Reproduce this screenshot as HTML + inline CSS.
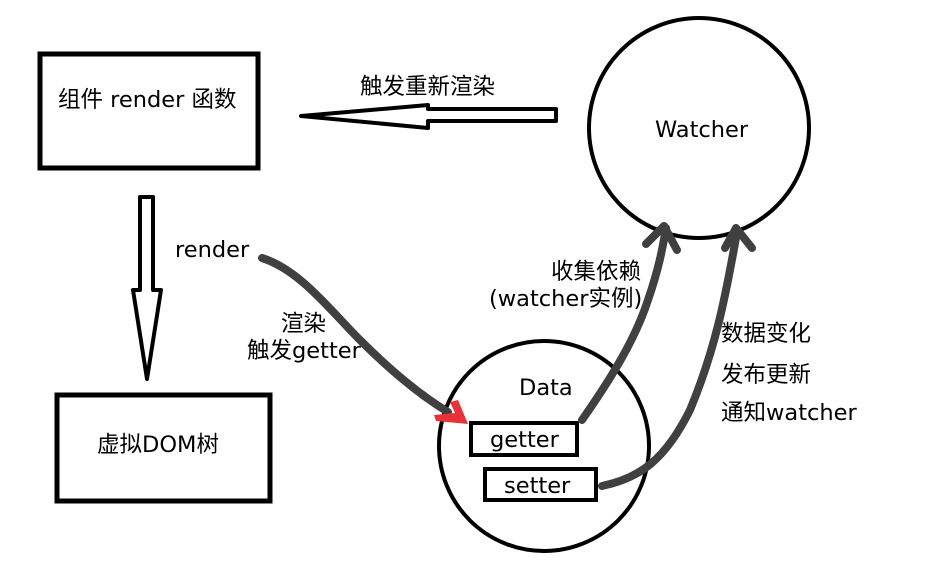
<!DOCTYPE html>
<html><head><meta charset="utf-8"><style>
html,body{margin:0;padding:0;background:#fff;width:936px;height:574px;overflow:hidden}
text{font-family:"DejaVu Sans","Noto Sans CJK SC",sans-serif;font-size:22.5px;fill:#000}
</style></head><body>
<svg width="936" height="574" viewBox="0 0 936 574" xmlns="http://www.w3.org/2000/svg">
<rect x="40" y="54" width="218" height="114" fill="none" stroke="#000" stroke-width="5"/>
<text x="58" y="107">组件 render 函数</text>
<rect x="57" y="395" width="213" height="106" fill="none" stroke="#000" stroke-width="5"/>
<text x="97" y="452">虚拟DOM树</text>
<circle cx="699" cy="128" r="110" fill="none" stroke="#000" stroke-width="4"/>
<text x="655" y="137">Watcher</text>
<circle cx="544" cy="446" r="105" fill="none" stroke="#000" stroke-width="4"/>
<text x="519" y="395">Data</text>
<rect x="471" y="423" width="106" height="32" fill="none" stroke="#000" stroke-width="4"/>
<text x="490" y="447">getter</text>
<rect x="485" y="469" width="111" height="31" fill="none" stroke="#000" stroke-width="4"/>
<text x="504" y="493">setter</text>
<path d="M301,116 L428,105 L428,109 L556,109 L556,121 L428,121 L428,128 Z" fill="none" stroke="#000" stroke-width="4" stroke-linejoin="round"/>
<text x="360" y="94">触发重新渲染</text>
<path d="M140,197 L153,197 L153,290 L161,290 L147,379 L133,290 L140,290 Z" fill="none" stroke="#000" stroke-width="4" stroke-linejoin="round"/>
<text x="175" y="257">render</text>
<text x="281" y="331">渲染</text>
<text x="247" y="358">触发getter</text>
<text x="551" y="279">收集依赖</text>
<text x="489" y="306">(watcher实例)</text>
<text x="721" y="341">数据变化</text>
<text x="721" y="382">发布更新</text>
<text x="721" y="420">通知watcher</text>
<g fill="none" stroke="#404040" stroke-width="8" stroke-linecap="round" stroke-linejoin="round">
<path d="M262,258 C300,270 330,310 360,340 C390,370 420,395 448,412"/>
<path d="M582,420 C610,380 635,340 648,300 C660,265 663,245 666,228"/>
<path d="M646,244 L664,226 L677,250"/>
<path d="M602,486 C640,478 665,460 690,410 C715,350 725,300 737,232"/>
<path d="M725,248 L736,228 L752,248"/>
</g>
<path d="M434,415 L455,413 L450,402 L458,400 L468,424 L436,421 Z" fill="#e8323a"/>
</svg>
</body></html>
